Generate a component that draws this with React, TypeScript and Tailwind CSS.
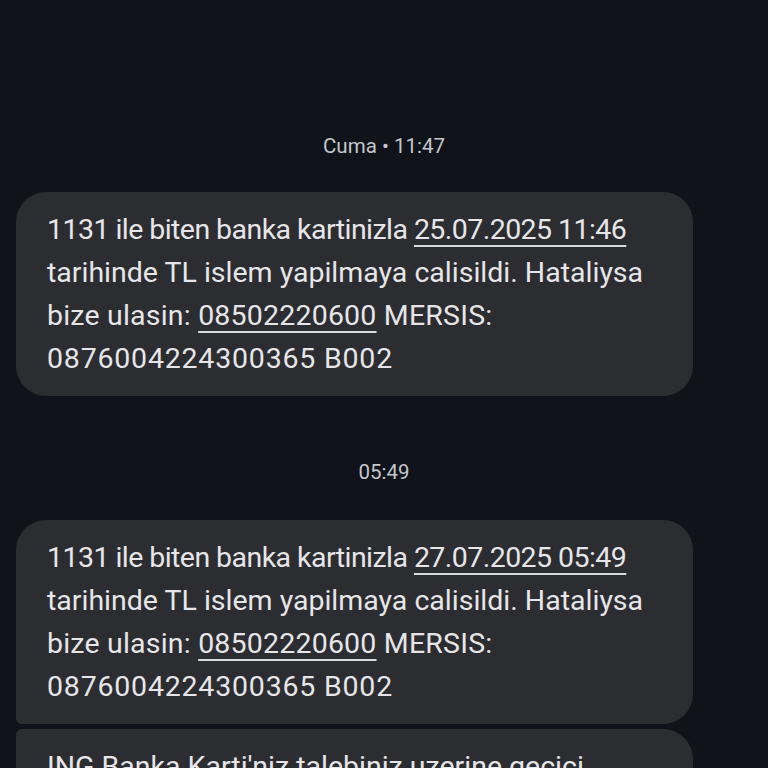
import React from 'react';

const font = { fontFamily: 'Roboto, "Noto Sans", sans-serif' };

function Stamp({ children }: { children: React.ReactNode }) {
  return (
    <div className="flex h-6 items-center justify-center text-[20.5px] leading-6 text-[#c4c7cc]">
      {children}
    </div>
  );
}

function Link({ children }: { children: React.ReactNode }) {
  return (
    <span className="underline decoration-2 underline-offset-[6px] decoration-[#d8d9dc]">{children}</span>
  );
}

function CardMessage({ date, className }: { date: string; className: string }) {
  return (
    <div
      className={`ml-4 w-[677px] bg-[#2c2d31] px-[31px] py-4 text-[28.5px] leading-[43px] whitespace-nowrap text-[#e6e6e8] ${className}`}
    >
      <span className="tracking-[-0.55px]">
        1131 ile biten banka kartinizla <Link>{date}</Link>
      </span>
      <br />
      tarihinde TL islem yapilmaya calisildi. Hataliysa
      <br />
      <span className="tracking-[0.2px]">
        bize ulasin: <Link>08502220600</Link> MERSIS:
      </span>
      <br />
      <span className="tracking-[0.8px]">0876004224300365 B002</span>
    </div>
  );
}

export default function App() {
  return (
    <div className="h-[768px] w-[768px] overflow-hidden bg-[#10131a] pt-[134px]" style={font}>
      <Stamp>Cuma • 11:47</Stamp>
      <div className="mt-[34px]">
        <CardMessage date="25.07.2025 11:46" className="rounded-[30px]" />
      </div>
      <div className="mt-[64px]">
        <Stamp>05:49</Stamp>
      </div>
      <div className="mt-[36px]">
        <CardMessage date="27.07.2025 05:49" className="rounded-[30px] rounded-bl-[6px]" />
      </div>
      <div className="mt-[5px] ml-4 w-[677px] rounded-[30px] rounded-tl-[6px] bg-[#2c2d31] px-[31px] py-4 text-[28.5px] leading-[43px] whitespace-nowrap text-[#e6e6e8]">
        ING Banka Karti'niz talebiniz uzerine gecici
        <br />
        olarak kullanima kapatilmistir.
      </div>
    </div>
  );
}
